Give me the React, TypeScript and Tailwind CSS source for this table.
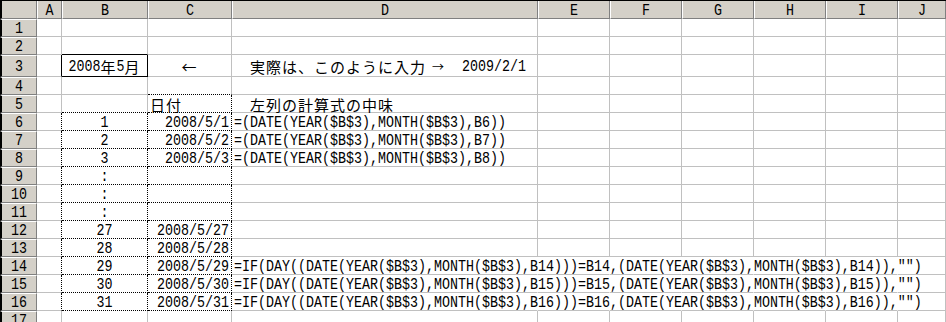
import React from "react";

type ColKey = "A" | "B" | "C" | "D" | "E" | "F" | "G" | "H" | "I" | "J";
type Edge = "g" | "s" | "d" | "n";
type Spec = { t?: string; node?: React.ReactNode; al?: "l" | "c" | "r"; r?: Edge; b?: Edge };

const COLS: ColKey[] = ["A", "B", "C", "D", "E", "F", "G", "H", "I", "J"];

const WIDTH: Record<ColKey, string> = {
  A: "w-[25px]",
  B: "w-[86px]",
  C: "w-[84px]",
  D: "w-[306px]",
  E: "w-[72px]",
  F: "w-[72px]",
  G: "w-[72px]",
  H: "w-[72px]",
  I: "w-[72px]",
  J: "flex-1",
};

const RIGHT: Record<Edge, string> = {
  g: "border-r-[#c0c0c0]",
  s: "border-r-black",
  d: "border-r-black [border-right-style:dotted]",
  n: "border-r-transparent",
};
const BOTTOM: Record<Edge, string> = {
  g: "border-b-[#c0c0c0]",
  s: "border-b-black",
  d: "border-b-black [border-bottom-style:dotted]",
  n: "border-b-transparent",
};
const ALIGN = { l: "justify-start pl-[2px]", c: "justify-center", r: "justify-end pr-[2px]" };

const HALF =
  "inline-block whitespace-pre font-['Liberation_Mono',monospace] text-[13.333px] leading-[15px] scale-y-[1.25]";
const FULL =
  "inline-block whitespace-pre font-['Noto_Sans_CJK_JP',sans-serif] text-[15px] leading-[15px] tracking-[1px]";

// Half-width runs in a narrow monospace face, full-width runs in the CJK face.
function Txt({ s }: { s: string }) {
  const parts = s.match(/[\x00-\x7f]+|[^\x00-\x7f]+/g) ?? [];
  return (
    <>
      {parts.map((p, i) =>
        /^[\x00-\x7f]/.test(p) ? (
          <span key={i} className={HALF}>
            {p}
          </span>
        ) : (
          <span key={i} className={FULL}>
            {p}
          </span>
        )
      )}
    </>
  );
}

const noteD3 = (
  <>
    <Txt s="  実際は、このように入力" />
    <span className="inline-block ml-[6px] w-[12px] font-['Noto_Sans_CJK_JP',sans-serif] text-[12px] leading-[15px]">
      →
    </span>
    <span className="inline-block w-[18px]" />
    <Txt s="2009/2/1" />
  </>
);

const ROWS: Record<number, Partial<Record<ColKey, Spec>>> = {
  2: { B: { b: "s" } },
  3: {
    A: { r: "s" },
    B: { t: "2008年5月", al: "c", r: "s", b: "s" },
    C: { t: "←", al: "c" },
    D: { node: noteD3, al: "l" },
  },
  4: { C: { b: "d" } },
  5: {
    B: { b: "d" },
    C: { t: "日付", al: "l", r: "d", b: "d" },
    D: { t: "  左列の計算式の中味", al: "l" },
  },
};

const listB: Record<number, string> = {
  6: "1",
  7: "2",
  8: "3",
  9: ":",
  10: ":",
  11: ":",
  12: "27",
  13: "28",
  14: "29",
  15: "30",
  16: "31",
};
const listC: Record<number, string> = {
  6: "2008/5/1",
  7: "2008/5/2",
  8: "2008/5/3",
  12: "2008/5/27",
  13: "2008/5/28",
  14: "2008/5/29",
  15: "2008/5/30",
  16: "2008/5/31",
};
const listD: Record<number, string> = {
  6: "=(DATE(YEAR($B$3),MONTH($B$3),B6))",
  7: "=(DATE(YEAR($B$3),MONTH($B$3),B7))",
  8: "=(DATE(YEAR($B$3),MONTH($B$3),B8))",
  14: '=IF(DAY((DATE(YEAR($B$3),MONTH($B$3),B14)))=B14,(DATE(YEAR($B$3),MONTH($B$3),B14)),"")',
  15: '=IF(DAY((DATE(YEAR($B$3),MONTH($B$3),B15)))=B15,(DATE(YEAR($B$3),MONTH($B$3),B15)),"")',
  16: '=IF(DAY((DATE(YEAR($B$3),MONTH($B$3),B16)))=B16,(DATE(YEAR($B$3),MONTH($B$3),B16)),"")',
};

for (let r = 6; r <= 16; r++) {
  const row: Partial<Record<ColKey, Spec>> = {
    A: { r: "d" },
    B: { t: listB[r], al: "c", r: "d", b: "d" },
    C: { t: listC[r], al: "r", r: "d", b: "d" },
  };
  if (listD[r]) row.D = { t: listD[r], al: "l" };
  // long formulas spill across the neighbouring empty cells
  if (r >= 14) {
    row.D = { ...row.D, r: "n" };
    for (const k of ["E", "F", "G", "H", "I"] as ColKey[]) row[k] = { r: "n" };
  }
  ROWS[r] = row;
}

function Cell({ col, spec }: { col: ColKey; spec: Spec }) {
  const r = RIGHT[spec.r ?? "g"];
  const b = BOTTOM[spec.b ?? "g"];
  const al = ALIGN[spec.al ?? "l"];
  return (
    <div
      className={`${WIDTH[col]} h-full shrink-0 border-r border-b ${r} ${b} flex items-center ${al} pt-[2px] overflow-visible whitespace-nowrap text-black`}
    >
      {spec.node ?? (spec.t ? <Txt s={spec.t} /> : null)}
    </div>
  );
}

export default function App() {
  const rowNums = Array.from({ length: 17 }, (_, i) => i + 1);
  return (
    <div className="w-[946px] h-[322px] overflow-hidden bg-white select-none">
      {/* column headers */}
      <div className="flex h-[19px] border-t border-t-black">
        <div className="w-[37px] h-full shrink-0 bg-[#d4d0c8] border-l-2 border-l-black border-r border-r-[#808080] border-b border-b-[#808080]" />
        {COLS.map((c) => (
          <div
            key={c}
            className={`${WIDTH[c]} h-full shrink-0 bg-[#d4d0c8] border-l border-l-white border-r border-r-[#808080] border-b border-b-[#808080] flex items-center justify-center pt-[1px]`}
          >
            <Txt s={c} />
          </div>
        ))}
      </div>
      {rowNums.map((n) => {
        const specs = ROWS[n] ?? {};
        return (
          <div key={n} className={`flex ${n === 3 ? "h-[22px]" : "h-[18px]"}`}>
            <div className="w-[37px] h-full shrink-0 bg-[#d4d0c8] border-l-2 border-l-black border-t border-t-white border-r border-r-[#808080] border-b border-b-[#808080] flex items-center justify-center pt-[1px]">
              <Txt s={String(n)} />
            </div>
            {COLS.map((c) => (
              <Cell key={c} col={c} spec={specs[c] ?? {}} />
            ))}
          </div>
        );
      })}
    </div>
  );
}
